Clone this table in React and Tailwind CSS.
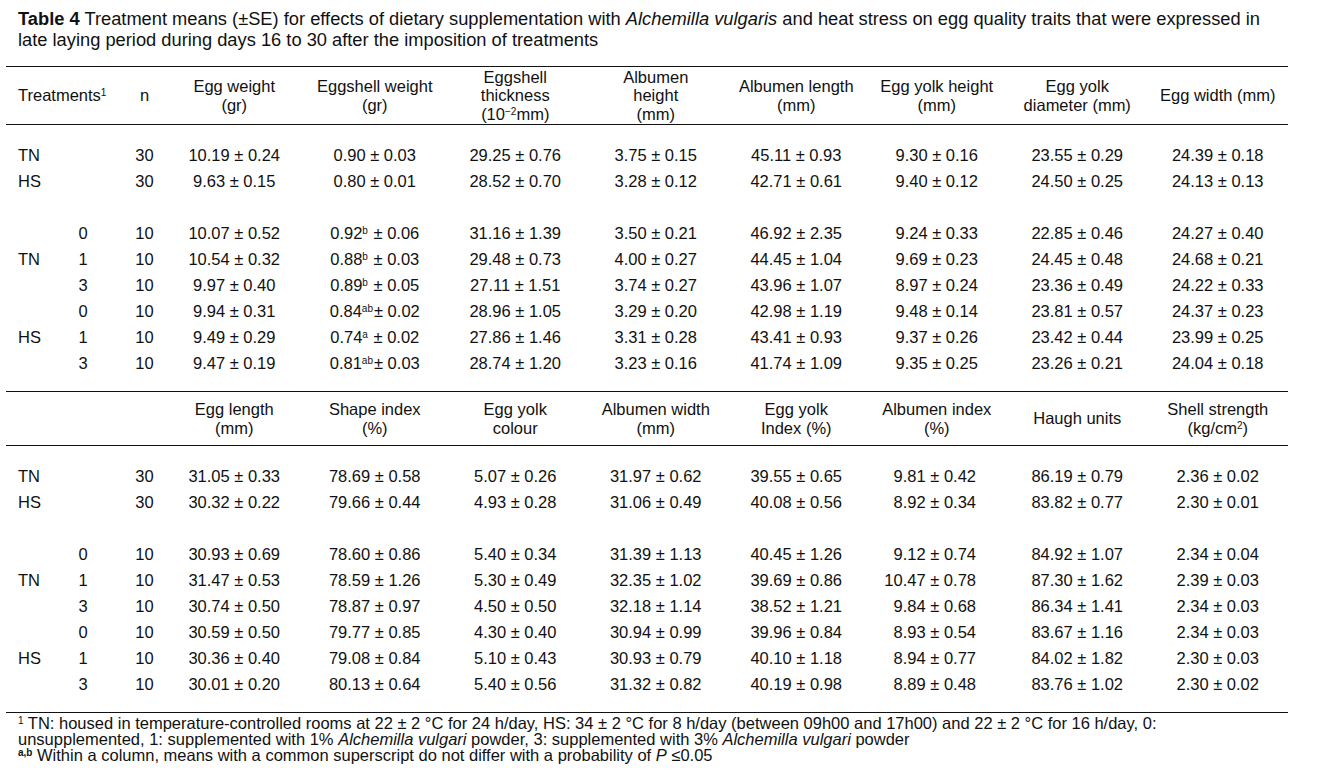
const GRID = 'grid grid-cols-[119px_39px_repeat(8,140.5px)]';

const HEAD_1 = [
  ['Egg weight', '(gr)'],
  ['Eggshell weight', '(gr)'],
  ['Eggshell', 'thickness', <>(10<sup className="text-[10px]">−2</sup>mm)</>],
  ['Albumen', 'height', '(mm)'],
  ['Albumen length', '(mm)'],
  ['Egg yolk height', '(mm)'],
  ['Egg yolk', 'diameter (mm)'],
  ['Egg width (mm)'],
];

const HEAD_2 = [
  ['Egg length', '(mm)'],
  ['Shape index', '(%)'],
  ['Egg yolk', 'colour'],
  ['Albumen width', '(mm)'],
  ['Egg yolk', 'Index (%)'],
  ['Albumen index', '(%)'],
  ['Haugh units'],
  ['Shell strength', <>(kg/cm<sup className="text-[10px]">2</sup>)</>],
];

// label, level, n, values
const ROWS_1 = [
  ['TN', '', '30', ['10.19 ± 0.24', '0.90 ± 0.03', '29.25 ± 0.76', '3.75 ± 0.15', '45.11 ± 0.93', '9.30 ± 0.16', '23.55 ± 0.29', '24.39 ± 0.18']],
  ['HS', '', '30', ['9.63 ± 0.15', '0.80 ± 0.01', '28.52 ± 0.70', '3.28 ± 0.12', '42.71 ± 0.61', '9.40 ± 0.12', '24.50 ± 0.25', '24.13 ± 0.13']],
  null,
  ['', '0', '10', ['10.07 ± 0.52', ['0.92', 'b', ' ± 0.06'], '31.16 ± 1.39', '3.50 ± 0.21', '46.92 ± 2.35', '9.24 ± 0.33', '22.85 ± 0.46', '24.27 ± 0.40']],
  ['TN', '1', '10', ['10.54 ± 0.32', ['0.88', 'b', ' ± 0.03'], '29.48 ± 0.73', '4.00 ± 0.27', '44.45 ± 1.04', '9.69 ± 0.23', '24.45 ± 0.48', '24.68 ± 0.21']],
  ['', '3', '10', ['9.97 ± 0.40', ['0.89', 'b', ' ± 0.05'], '27.11 ± 1.51', '3.74 ± 0.27', '43.96 ± 1.07', '8.97 ± 0.24', '23.36 ± 0.49', '24.22 ± 0.33']],
  ['', '0', '10', ['9.94 ± 0.31', ['0.84', 'ab', '± 0.02'], '28.96 ± 1.05', '3.29 ± 0.20', '42.98 ± 1.19', '9.48 ± 0.14', '23.81 ± 0.57', '24.37 ± 0.23']],
  ['HS', '1', '10', ['9.49 ± 0.29', ['0.74', 'a', ' ± 0.02'], '27.86 ± 1.46', '3.31 ± 0.28', '43.41 ± 0.93', '9.37 ± 0.26', '23.42 ± 0.44', '23.99 ± 0.25']],
  ['', '3', '10', ['9.47 ± 0.19', ['0.81', 'ab', '± 0.03'], '28.74 ± 1.20', '3.23 ± 0.16', '41.74 ± 1.09', '9.35 ± 0.25', '23.26 ± 0.21', '24.04 ± 0.18']],
];

const ROWS_2 = [
  ['TN', '', '30', ['31.05 ± 0.33', '78.69 ± 0.58', '5.07 ± 0.26', '31.97 ± 0.62', '39.55 ± 0.65', '9.81 ± 0.42', '86.19 ± 0.79', '2.36 ± 0.02']],
  ['HS', '', '30', ['30.32 ± 0.22', '79.66 ± 0.44', '4.93 ± 0.28', '31.06 ± 0.49', '40.08 ± 0.56', '8.92 ± 0.34', '83.82 ± 0.77', '2.30 ± 0.01']],
  null,
  ['', '0', '10', ['30.93 ± 0.69', '78.60 ± 0.86', '5.40 ± 0.34', '31.39 ± 1.13', '40.45 ± 1.26', '9.12 ± 0.74', '84.92 ± 1.07', '2.34 ± 0.04']],
  ['TN', '1', '10', ['31.47 ± 0.53', '78.59 ± 1.26', '5.30 ± 0.49', '32.35 ± 1.02', '39.69 ± 0.86', '10.47 ± 0.78', '87.30 ± 1.62', '2.39 ± 0.03']],
  ['', '3', '10', ['30.74 ± 0.50', '78.87 ± 0.97', '4.50 ± 0.50', '32.18 ± 1.14', '38.52 ± 1.21', '9.84 ± 0.68', '86.34 ± 1.41', '2.34 ± 0.03']],
  ['', '0', '10', ['30.59 ± 0.50', '79.77 ± 0.85', '4.30 ± 0.40', '30.94 ± 0.99', '39.96 ± 0.84', '8.93 ± 0.54', '83.67 ± 1.16', '2.34 ± 0.03']],
  ['HS', '1', '10', ['30.36 ± 0.40', '79.08 ± 0.84', '5.10 ± 0.43', '30.93 ± 0.79', '40.10 ± 1.18', '8.94 ± 0.77', '84.02 ± 1.82', '2.30 ± 0.03']],
  ['', '3', '10', ['30.01 ± 0.20', '80.13 ± 0.64', '5.40 ± 0.56', '31.32 ± 0.82', '40.19 ± 0.98', '8.89 ± 0.48', '83.76 ± 1.02', '2.30 ± 0.02']],
];

function Value({ v }) {
  if (Array.isArray(v)) {
    const [num, sup, rest] = v;
    return (
      <span className="whitespace-pre">
        {num}<sup className="text-[10px] mr-[1px]">{sup}</sup>{rest}
      </span>
    );
  }
  return <span>{v}</span>;
}

function Header({ cols, first }) {
  return (
    <div className={`${GRID} items-center border-y border-[#111] leading-[18.5px] ${first ? 'h-[59px]' : 'h-[55px]'}`}>
      <div className="pl-[12px]">
        {first && <>Treatments<sup className="text-[10px]">1</sup></>}
      </div>
      <div className="text-center">{first ? 'n' : ''}</div>
      {cols.map((lines, i) => (
        <div key={i} className="text-center">
          {lines.map((l, j) => <div key={j}>{l}</div>)}
        </div>
      ))}
    </div>
  );
}

function Body({ rows, rightCol }) {
  return (
    <div className="pt-[17px] pb-[15px]">
      {rows.map((r, i) => {
        if (!r) return <div key={i} className="h-[26px]" />;
        const [label, level, n, vals] = r;
        return (
          <div key={i} className={`${GRID} h-[26px] items-center whitespace-nowrap`}>
            <div className="flex pl-[12px]">
              <span className="w-[56px]">{label}</span>
              <span className="w-[18px] text-center">{level}</span>
            </div>
            <div className="text-center">{n}</div>
            {vals.map((v, j) => (
              <div key={j} className={j === rightCol ? 'text-right pr-[31px]' : 'text-center'}>
                <Value v={v} />
              </div>
            ))}
          </div>
        );
      })}
    </div>
  );
}

export default function App() {
  return (
    <div className="w-[1317px] h-[782px] bg-white text-[#111] font-['Liberation_Sans',Arial,sans-serif] overflow-hidden">
      <p className="pl-[18px] pt-[8px] text-[18.3px] leading-[21px]">
        <b>Table 4</b> Treatment means (±SE) for effects of dietary supplementation with <i>Alchemilla vulgaris</i> and heat stress on egg quality traits that were expressed in
        <br />
        late laying period during days 16 to 30 after the imposition of treatments
      </p>

      <div className="ml-[6px] w-[1282px] mt-[16px] text-[16.5px]">
        <Header cols={HEAD_1} first />
        <Body rows={ROWS_1} rightCol={-1} />
        <Header cols={HEAD_2} />
        <div className="border-b border-[#111]">
          <Body rows={ROWS_2} rightCol={5} />
        </div>

        <div className="pl-[12px] pt-[2px] text-[16.5px] leading-[16px] whitespace-nowrap">
          <p>
            <sup className="text-[10px]">1</sup> TN: housed in temperature-controlled rooms at 22 ± 2 °C for 24 h/day, HS: 34 ± 2 °C for 8 h/day (between 09h00 and 17h00) and 22 ± 2 °C for 16 h/day, 0:
          </p>
          <p>
            unsupplemented, 1: supplemented with 1% <i>Alchemilla vulgari</i> powder, 3: supplemented with 3% <i>Alchemilla vulgari</i> powder
          </p>
          <p>
            <sup className="text-[10px] font-bold">a,b</sup> Within a column, means with a common superscript do not differ with a probability of <i>P</i> ≤0.05
          </p>
        </div>
      </div>
    </div>
  );
}
